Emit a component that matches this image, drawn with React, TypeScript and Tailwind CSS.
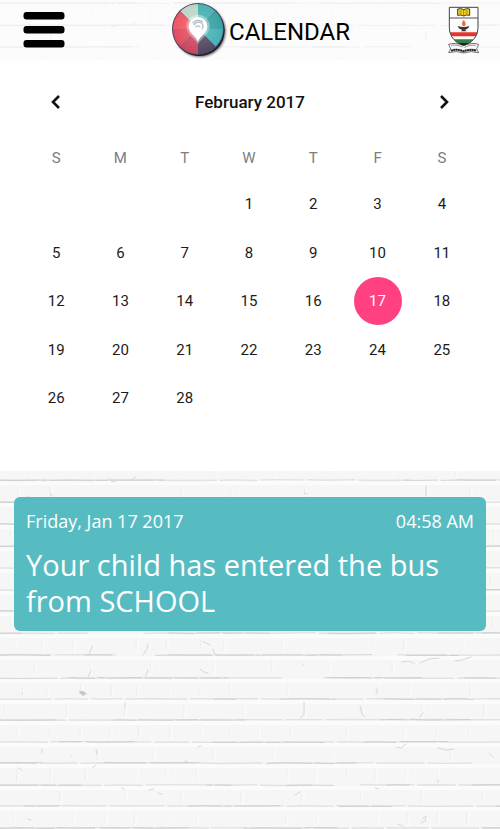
import { useState } from "react";

const COURSES: { y: number; seams: number[] }[] = [
  { y: -13, seams: [30, 92, 150, 215, 275, 331, 392, 455] },
  { y: 9, seams: [18, 50, 181, 230, 304, 426, 470] },
  { y: 31, seams: [40, 99, 158, 218, 279, 340, 402, 462] },
  { y: 53, seams: [10, 70, 130, 190, 250, 310, 370, 494] },
  { y: 75, seams: [40, 100, 160, 220, 280, 340, 400, 460] },
  { y: 97, seams: [8, 68, 128, 188, 248, 308, 368, 490] },
  { y: 119, seams: [40, 100, 160, 220, 280, 340, 400, 460] },
  { y: 140, seams: [10, 70, 130, 190, 250, 310, 370, 492] },
  { y: 162, seams: [14, 42, 73, 136, 166, 200, 224, 282, 372, 404, 463] },
  { y: 184, seams: [34, 90, 150, 213, 271, 329, 392] },
  { y: 207, seams: [22, 47, 81, 111, 137, 168, 199, 229, 287, 376, 409, 438, 470] },
  { y: 228, seams: [4, 66, 125, 184, 243, 304, 362, 422, 484] },
  { y: 249, seams: [17, 49, 80, 110, 139, 170, 200, 229, 258, 290, 347, 404, 436, 468] },
  { y: 271, seams: [97, 153, 213, 273, 332, 451] },
  { y: 292, seams: [17, 50, 85, 136, 166, 196, 287, 315, 346, 375, 406, 437] },
  { y: 314, seams: [60, 125, 181, 241, 302, 360, 421, 482] },
  { y: 335, seams: [13, 73, 105, 135, 166, 196, 286, 316, 377, 407, 437, 467] },
  { y: 357, seams: [35, 90, 160, 230, 300, 370, 440] },
];

const CHIPS = [
  "M108 7l3 3 4 1M132 8l4-2M27 25l3 2M51 23l1 2M304 22l3 1M426 16v8",
  "M88 184q2-1 4-9M143 184l4-6 1-5M202 170l4 2 4 2M213 178l1 4 3 3",
  "M22 223v-1M79 220l5 1 3 2M80 222l4 2M402 191l6-1 6 2M420 192l9-4 10-1M455 190l7-1 9-3",
  "M304 231v12l-4 4M360 235l2 8 3 3M125 232v4M423 242l-3 4M303 193v1M377 217v6",
  "M42 278v4M96 279l1 4M71 284v1M185 290l3 1M198 276l3-1M396 276l5 1 5-4M438 277l8 2 8-1M489 282l4 4",
  "M18 297l4 2M92 297l4-3M122 317l2 1M149 319l5-1M158 322l4 1M295 324l5-3M438 309v3M375 317l4 1",
  "M28 348l3 1M16 356l5 2M398 353l5 2M422 348l4-3-1 5-4 2",
  "M200 198l4 3 4 1M88 206l3-6M145 206l3-7",
];

function noise(n: number) {
  const v = Math.sin(n * 127.1 + 11.7) * 43758.5453;
  return v - Math.floor(v);
}

function jointPath(y: number, row: number, dark: boolean) {
  let d = "";
  let x = -4;
  let i = 0;
  while (x < 504) {
    const length = (dark ? 22 : 30) + noise(row * 31 + i) * 40;
    const visible = noise(row * 57 + i * 3) > (dark ? 0.5 : 0.08);
    if (visible) {
      const a = y + noise(row + i * 7) - 0.5;
      const b = y + noise(row + (i + 1) * 7) - 0.5;
      d += `M${x} ${a}l${length / 3} ${b - a}l${(length * 2) / 3} ${a - b}`;
    }
    x += length + 3;
    i += 1;
  }
  return d;
}

function Bricks({ className, top = 0 }: { className: string; top?: number }) {
  return (
    <svg
      aria-hidden="true"
      viewBox={`0 ${top} 500 358`}
      preserveAspectRatio="xMidYMin slice"
      className={`col-start-1 row-start-1 h-0 min-h-full w-full ${className}`}
      fill="none"
    >
      {COURSES.map(({ y, seams }, row) => (
        <g key={y}>
          <path d={`M0 ${y + 3}H500`} stroke="#fbfbfb" strokeWidth="4" />
          {seams.map((x, i) => (
            <g key={x}>
              <path
                d={`M${x + 1} ${y + 3}l1 8l-1 9`}
                stroke="#f9f9f9"
                strokeWidth="2"
              />
              <path
                d={`M${x} ${y + 6}l${noise(x) * 2 - 1} 6l0 6`}
                stroke="#e8e8e8"
                strokeOpacity={0.2 + noise(i + y) * 0.5}
              />
            </g>
          ))}
          <path d={jointPath(y, row, false)} stroke="#e2e2e2" strokeWidth="1.4" />
          <path d={jointPath(y, row + 40, true)} stroke="#c4c4c4" strokeOpacity="0.7" />
        </g>
      ))}
      {CHIPS.map((d) => (
        <path key={d} d={d} stroke="#d8d8d8" strokeLinecap="round" />
      ))}
      <path d="M79 221l4-1 3 3-3 2z" fill="#c4c4c4" />
    </svg>
  );
}

function Logo() {
  return (
    <svg aria-hidden="true" viewBox="33 0 174 180" className="h-[60px] w-[58px] shrink-0">
      <defs>
        <filter id="disc-shadow" x="-20%" y="-20%" width="140%" height="140%">
          <feGaussianBlur stdDeviation="3" />
        </filter>
        <radialGradient id="disc-shine">
          <stop offset="0" stopColor="#fff" stopOpacity="0.2" />
          <stop offset="1" stopColor="#fff" stopOpacity="0" />
        </radialGradient>
      </defs>
      <circle cx="120" cy="94" r="77" fill="#000" fillOpacity="0.6" filter="url(#disc-shadow)" />
      <circle cx="117" cy="91" r="77" fill="#15151f" />
      <circle cx="114" cy="87" r="78" fill="#49425d" />
      <path d="M114 87L61 34A75 75 0 0 1 114 12z" fill="#bdd6c5" />
      <path d="M114 87V12A75 75 0 0 1 167 34z" fill="#48b1b4" />
      <path d="M114 87L167 34A75 75 0 0 1 189 87z" fill="#39a1a5" />
      <path d="M114 87H189A75 75 0 0 1 167 140z" fill="#45b2b4" />
      <path d="M114 87L167 140A75 75 0 0 1 114 162z" fill="#51465f" />
      <path d="M114 87V162A75 75 0 0 1 61 140z" fill="#c9455f" />
      <path d="M114 87L61 140A75 75 0 0 1 39 87z" fill="#e04b60" />
      <path d="M114 87H39A75 75 0 0 1 61 34z" fill="#ee5664" />
      <circle cx="114" cy="87" r="75" fill="url(#disc-shine)" />
      <path
        d="M114 133C104 115 79 103 79 79a35 35 0 0 1 70 0c0 24-25 36-35 54z"
        fill="#fff"
        fillOpacity="0.35"
      />
      <path
        d="M114 125C108 109 86 99 86 79a28 28 0 0 1 56 0c0 20-22 30-28 46z"
        fill="#fff"
      />
      <path
        d="M102 76a14 14 0 0 1 27 2c0 4-1 7-4 9M107 82a8 8 0 0 1 14 0M98 70a20 20 0 0 1 30-4"
        fill="none"
        stroke="#b5bcc1"
        strokeWidth="4"
      />
    </svg>
  );
}

function Crest() {
  return (
    <svg role="img" aria-label="School crest" viewBox="53 18 96 144" className="h-12 w-8 shrink-0">
      <defs>
        <clipPath id="shield">
          <path d="M57 22H143V82C143 113 122 128 100 140C78 128 57 113 57 82z" />
        </clipPath>
      </defs>
      <g clipPath="url(#shield)">
        <path d="M57 22H143V142H57z" fill="#fcfcfc" />
        <path d="M57 97H143V109H57z" fill="#e5342d" />
        <path d="M57 118H143V129H57z" fill="#348044" />
        <path d="M57 129H143V142H57z" fill="#222" />
      </g>
      <path d="M57 54H143" stroke="#555" strokeWidth="3" />
      <path
        d="M57 22H143V82C143 113 122 128 100 140C78 128 57 113 57 82z"
        fill="none"
        stroke="#444"
        strokeWidth="3"
      />
      <path d="M82 27Q92 24 100 29Q108 24 118 27V46Q108 43 100 48Q92 43 82 46z" fill="#f4db2d" stroke="#443c15" strokeWidth="3" />
      <path d="M100 29V48M87 33h8M105 33h8M87 39h8M105 39h8" stroke="#6a5b13" strokeWidth="2" />
      <path d="M100 60Q109 70 104 78H97Q92 70 100 60z" fill="#ee6b2c" />
      <path d="M82 78Q99 84 117 78Q114 88 104 89L109 94H92L96 89Q84 87 82 78z" fill="#413234" />
      <path
        d="M55 133Q73 126 100 137Q127 126 145 133L139 147L145 158Q122 151 100 159Q78 151 55 158L61 147z"
        fill="#fafafa"
        stroke="#333"
        strokeWidth="2"
      />
      <path
        d="M63 136Q80 133 98 142M103 142Q120 134 137 136"
        fill="none"
        stroke="#666"
        strokeWidth="3"
        strokeDasharray="4 2"
      />
      <path
        d="M62 152Q81 146 100 154Q119 146 138 152"
        fill="none"
        stroke="#222"
        strokeWidth="6"
        strokeDasharray="6 1"
      />
    </svg>
  );
}

const WEEKDAYS = [
  ["S", "Sunday"],
  ["M", "Monday"],
  ["T", "Tuesday"],
  ["W", "Wednesday"],
  ["T", "Thursday"],
  ["F", "Friday"],
  ["S", "Saturday"],
];

const FIRST_WEEKDAY = 3;
const DAYS_IN_MONTH = 28;

const WEEKS = Array.from({ length: 5 }, (_, week) =>
  Array.from({ length: 7 }, (_, weekday) => {
    const day = week * 7 + weekday - FIRST_WEEKDAY + 1;
    return day >= 1 && day <= DAYS_IN_MONTH ? day : null;
  }),
);

function Chevron({ d }: { d: string }) {
  return (
    <svg aria-hidden="true" viewBox="0 0 24 24" className="size-6" fill="none" stroke="#111" strokeWidth="2.6">
      <path d={d} />
    </svg>
  );
}

function Calendar() {
  const [selected, setSelected] = useState(17);
  return (
    <section aria-label="Calendar" className="bg-white pt-2.5 pr-[26px] pb-12 pl-6 text-[15px] text-[#1b1b1b]">
      <div className="flex h-[66px] items-center justify-between pr-[18px] pl-5">
        <button type="button" aria-label="Previous month">
          <Chevron d="M15 5L9 11L15 17" />
        </button>
        <h2 className="text-[17px] font-medium text-[#111]">February 2017</h2>
        <button type="button" aria-label="Next month">
          <Chevron d="M9 5L15 11L9 17" />
        </button>
      </div>
      <table className="h-[287px] w-full table-fixed border-collapse text-center">
        <thead>
          <tr className="h-11">
            {WEEKDAYS.map(([letter, name]) => (
              <th key={name} scope="col" abbr={name} className="p-0 font-normal text-[#7d7d7d]">
                {letter}
              </th>
            ))}
          </tr>
        </thead>
        <tbody>
          {WEEKS.map((week, i) => (
            <tr key={i}>
              {week.map((day, j) => (
                <td key={j} className="p-0">
                  {day && (
                    <button
                      type="button"
                      aria-pressed={day === selected}
                      onClick={() => setSelected(day)}
                      className={
                        day === selected
                          ? "mx-auto block size-12 rounded-full bg-[#ff4081] text-white"
                          : "mx-auto block size-12 rounded-full"
                      }
                    >
                      {day}
                    </button>
                  )}
                </td>
              ))}
            </tr>
          ))}
        </tbody>
      </table>
    </section>
  );
}

export default function App() {
  return (
    <div className="flex min-h-screen flex-col bg-white font-[Roboto,sans-serif]">
      <header className="grid bg-[#fcfcfc]">
        <Bricks className="opacity-30" top={-16} />
        <div className="z-10 col-start-1 row-start-1 flex h-15 items-center justify-between pr-5 pl-[23px]">
          <button type="button" aria-label="Open menu" className="w-[50px]">
            <svg aria-hidden="true" viewBox="0 0 42 36" className="h-9 w-[42px]">
              <rect x="0.5" y="0" width="41" height="7.5" rx="3" />
              <rect x="0.5" y="14" width="41" height="7.5" rx="3" />
              <rect x="0.5" y="28" width="41" height="7.5" rx="3" />
            </svg>
          </button>
          <div className="flex items-center">
            <Logo />
            <h1 className="pt-1 text-2xl text-black">CALENDAR</h1>
          </div>
          <Crest />
        </div>
      </header>
      <Calendar />
      <main className="grid flex-1 bg-[#f6f6f6]">
        <Bricks className="" />
        <div className="z-10 col-start-1 row-start-1 px-3.5 pt-[26px] pb-6">
          <article className="rounded-md bg-[#56bcc2] px-3 pt-3 pb-3 font-['Trebuchet_MS','Open_Sans',sans-serif] text-white">
            <div className="flex justify-between text-lg leading-6">
              <span>Friday, Jan 17 2017</span>
              <span>04:58 AM</span>
            </div>
            <p className="pt-3.5 text-[29px] leading-9">Your child has entered the bus from SCHOOL</p>
          </article>
        </div>
      </main>
    </div>
  );
}
